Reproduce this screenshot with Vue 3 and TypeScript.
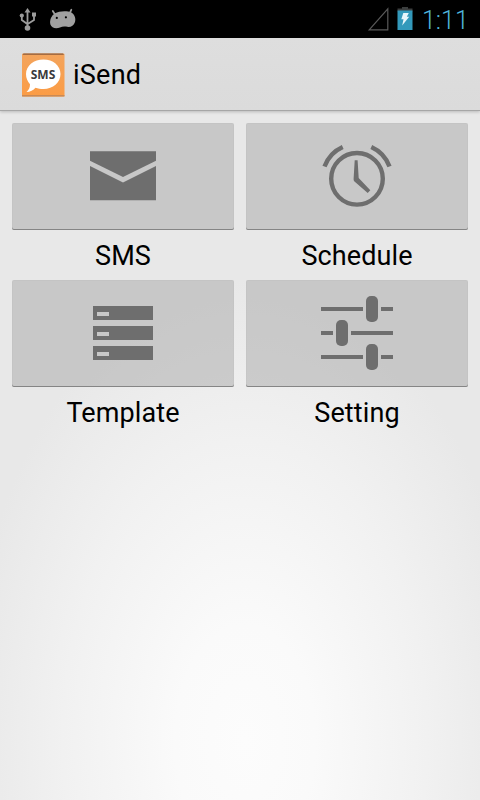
<template>
  <div class="screen">
    <header class="status-bar">
      <div class="status-left">
        <svg class="icon-usb" width="18" height="24" viewBox="0 0 18 24">
          <path d="M8.500 3v17M2.800 8v4l5.500 4M15 7v5l-6.300 4" fill="none" stroke="#9c9c9c" stroke-width="1.800" />
          <path d="M8.500 0l3 4.500h-6z" fill="#9c9c9c" />
          <circle cx="2.800" cy="7.500" r="2.100" fill="#9c9c9c" />
          <rect x="13" y="4.500" width="4" height="4" fill="#9c9c9c" />
          <circle cx="8.500" cy="20" r="2.800" fill="#9c9c9c" />
        </svg>
        <svg class="icon-droid" width="28" height="22" viewBox="0 0 28 22">
          <path d="M3.800 3l2.500 4M22.300 1.800l-2 4" stroke="#9c9c9c" stroke-width="1.800" stroke-linecap="round" />
          <path d="M6 5.200C10 3 18 2.300 22.500 4.500C26 7 27 11 26 14C24.500 18.500 21 19.500 17 18.600C14.500 18.200 13 18.600 11 19.400C7 21 2.500 20 1.400 16.500C0.300 12 2.500 7.500 6 5.200z" fill="#a0a0a0" />
          <circle cx="7.800" cy="9.900" r="1.100" fill="#000" />
          <circle cx="16.900" cy="9.300" r="1.100" fill="#000" />
        </svg>
      </div>
      <div class="status-right">
        <svg width="22" height="25" viewBox="0 0 22 25">
          <path d="M2.200 22.800L20.800 1.800v21z" fill="none" stroke="#5a5a5a" stroke-width="1.200" />
        </svg>
        <svg class="icon-battery" width="16" height="24" viewBox="0 0 16 24">
          <path d="M5 0h6v1.500h4.500v3h-15v-3H5z" fill="#3c3f3f" />
          <rect x="0.500" y="3.500" width="15" height="19.500" fill="#3399bb" />
          <path d="M6.300 6h5.500l-2 3.800h2.400L5.200 18.500l1.300-6.200H4.300z" fill="#e8f6fb" />
        </svg>
        <span class="clock">{{ time }}</span>
      </div>
    </header>

    <div class="action-bar">
      <svg class="app-icon" width="43" height="44" viewBox="0 0 43 44">
        <defs>
          <linearGradient id="orange" x1="0" y1="0" x2="0" y2="1">
            <stop offset="0" stop-color="#f3a45c" />
            <stop offset="1" stop-color="#fb9c45" />
          </linearGradient>
        </defs>
        <rect x="0" y="0.500" width="42.500" height="43" rx="1" fill="url(#orange)" />
        <path d="M1.500 0.500h39.500l1 1.300H0.500z" fill="#8c5a38" />
        <rect x="0" y="42" width="42.500" height="1.500" fill="#c98a55" />
        <path d="M21.500 6.500C31 6.500 38.500 12.500 38.500 21S31 36 21.500 36C18.500 36 16 35.600 13.500 34.700C11.500 37.500 8 38.800 4.500 39C7 37 8 34.500 8 31.300C5.500 28.500 4 25 4 21C4 12.500 12 6.500 21.500 6.500z" fill="#fff" />
        <text x="21" y="25.800" class="app-icon-text" text-anchor="middle">SMS</text>
      </svg>
      <h1 class="title">{{ title }}</h1>
    </div>

    <main class="menu">
      <div v-for="item in items" :key="item.name" class="menu-item">
        <button class="menu-button" :aria-label="item.label">
          <svg width="96" height="107" viewBox="0 0 96 107">
            <g v-if="item.name === 'sms'" class="fill">
              <path d="M15 28.300h66v9.500L48 54L15 37.800z" />
              <path d="M15 43l33 16.500L81 43v34.300H15z" />
            </g>
            <g v-else-if="item.name === 'schedule'">
              <circle class="line" cx="48" cy="55.800" r="25.800" />
              <path class="line" d="M15.500 43.500A34.500 34.500 0 0 1 33.700 24M62.300 24A34.500 34.500 0 0 1 80.500 43.500" />
              <path class="fill" d="M45.700 37.200h2.900l1.100 17.800L61.300 67.300l-2.600 2.600L45.200 58.300Q44.500 57.500 44.600 56z" />
            </g>
            <g v-else-if="item.name === 'template'" class="fill">
              <path
                v-for="y in [26, 46, 66]"
                :key="y"
                fill-rule="evenodd"
                :d="`M18 ${y}h60v14H18zM22 ${y + 6}h12v4H22z`"
              />
            </g>
            <g v-else class="fill">
              <template v-for="s in sliders" :key="s.y">
                <rect x="12" :y="s.y" :width="s.knob - 15" height="4" />
                <rect :x="s.knob" :y="s.y - 11" width="12" height="26" rx="5" />
                <rect :x="s.knob + 15" :y="s.y" :width="69 - s.knob" height="4" />
              </template>
            </g>
          </svg>
        </button>
        <span class="menu-label">{{ item.label }}</span>
      </div>
    </main>
  </div>
</template>

<script setup lang="ts">
import { ref } from 'vue';

interface MenuItem {
  name: string;
  label: string;
}

const title = 'iSend';
const time = ref('1:11');

const items: MenuItem[] = [
  { name: 'sms', label: 'SMS' },
  { name: 'schedule', label: 'Schedule' },
  { name: 'template', label: 'Template' },
  { name: 'setting', label: 'Setting' },
];

// Slider rows of the setting icon
const sliders = [
  { y: 27, knob: 57 },
  { y: 51, knob: 27 },
  { y: 75, knob: 57 },
];
</script>

<style>
body {
  margin: 0;
}
</style>

<style scoped>
.screen {
  width: 480px;
  height: 800px;
  overflow: hidden;
  display: flex;
  flex-direction: column;
  font-family: Roboto, "Liberation Sans", sans-serif;
  color: #000;
  background: radial-gradient(ellipse 280px 460px at 245px 740px, #fcfcfc 0%, #fafafa 25%, #f1f1f1 65%, #e8e8e8 100%);
}

.status-bar {
  height: 38px;
  flex: none;
  box-sizing: border-box;
  padding: 0 12px 0 19px;
  display: flex;
  justify-content: space-between;
  background: #000;
}

.status-left {
  display: flex;
  align-items: flex-start;
  gap: 12px;
  padding-top: 8px;
}

.status-right {
  display: flex;
  align-items: flex-start;
  padding-top: 7px;
}

.icon-battery {
  margin-left: 8px;
}

.clock {
  width: 46px;
  margin-left: 9px;
  font-size: 25px;
  line-height: 27px;
  font-weight: 300;
  text-align: right;
  color: #4fb4dc;
}

.action-bar {
  height: 73px;
  flex: none;
  box-sizing: border-box;
  display: flex;
  align-items: center;
  padding: 1px 0 0 22px;
  background: linear-gradient(#dedede, #dbdbdb);
  border-bottom: 1px solid #a6a6a6;
  box-shadow: 0 1px 3px rgba(0, 0, 0, 0.2);
}

.app-icon-text {
  font-family: "Open Sans", sans-serif;
  font-size: 12px;
  font-weight: 700;
  fill: #3a3a3c;
}

.title {
  margin: 1px 0 0 8px;
  font-size: 27px;
  font-weight: 400;
  line-height: 32px;
  letter-spacing: 0.25px;
}

.menu {
  display: grid;
  grid-template-columns: 222px 222px;
  grid-auto-rows: 157px;
  column-gap: 12px;
  padding: 12px 12px 0;
}

.menu-item {
  display: flex;
  flex-direction: column;
  align-items: center;
}

.menu-button {
  width: 222px;
  height: 107px;
  padding: 0;
  border: none;
  border-radius: 2px;
  display: flex;
  justify-content: center;
  background: rgba(168, 168, 168, 0.5);
  box-shadow: inset 0 -1px 0 #858585, inset 0 0 0 1px rgba(0, 0, 0, 0.02);
}

.menu-label {
  margin-top: 10px;
  font-size: 27px;
  line-height: 32px;
  letter-spacing: 0.1px;
}

.fill {
  fill: #6e6e6e;
}

.line {
  fill: none;
  stroke: #6e6e6e;
  stroke-width: 4.4;
}
</style>
